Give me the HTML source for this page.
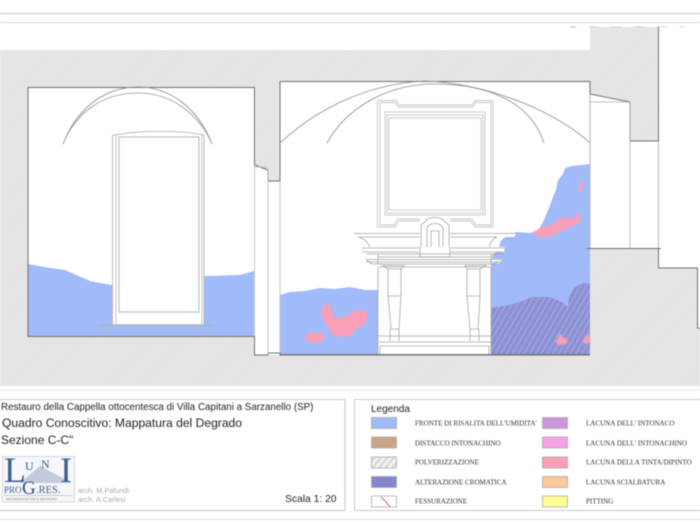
<!DOCTYPE html>
<html><head><meta charset="utf-8"><style>
html,body{margin:0;padding:0;background:#fff}
body{width:700px;height:525px;overflow:hidden;position:relative}
svg{position:absolute;left:0;top:0;filter:blur(.4px)}
</style></head><body>
<svg width="700" height="525" viewBox="0 0 700 525" xmlns="http://www.w3.org/2000/svg">
<defs>
<pattern id="g" width="2" height="2" patternUnits="userSpaceOnUse" patternTransform="rotate(45)"><rect width="2" height="2" fill="#ebebeb"/><rect width="1" height="2" fill="#dedede"/></pattern>
<pattern id="h" width="5" height="5" patternUnits="userSpaceOnUse" patternTransform="rotate(30)"><rect width="5" height="5" fill="#8c90d2"/><rect width="1.2" height="5" fill="#a3a8e4"/></pattern>
<pattern id="p" width="5" height="5" patternUnits="userSpaceOnUse" patternTransform="rotate(40)"><rect width="5" height="5" fill="#f2f2f2"/><rect width="2" height="5" fill="#d6d6d6"/></pattern>
<filter id="soft" x="-10%" y="-10%" width="120%" height="120%"><feGaussianBlur stdDeviation=".7"/></filter>
</defs>
<rect width="700" height="525" fill="#fff"/>
<path d="M0 13.5H700" stroke="#c4c4c4"/><path d="M0 22.5H700" stroke="#d8d8d8"/>
<path d="M570 27h6M589 27h10M611 27h11M633 27h11M656 27h11M679 27h6" stroke="#bbb"/>
<!-- masonry -->
<path d="M0 50H590V27H658.500V248H658.500V268H697.500V328H700V386H0Z" fill="url(#g)"/>
<!-- rooms -->
<path d="M28 87H254.500V165L268 170V181H280V81H590V94L630 102V141H658.500V248H590V355H254.500V336H28Z" fill="#fff"/>
<rect x="659" y="27" width="41" height="241" fill="#fff"/><rect x="698" y="268" width="2" height="60" fill="#fff"/>
<!-- blue -->
<path d="M28 264L50 268L65 270L90 281L100 283L112 285V336H254V271L240 275L204 276V336H28Z" fill="#a1baf9"/>
<path d="M100 336H212V326H100Z" fill="#a1baf9"/>
<path d="M280 295L290 292L305 291L320 288L335 289L350 287L365 290L378 290V354H280Z" fill="#a1baf9"/>
<path d="M590 164L572 166L565 168L563 174L558 180L556 190L553 197L549 208L544 220L538 231L530 233L517 232L507 235L500 242L499 250L492 255L490 258V355H590Z" fill="#a1baf9"/>
<path d="M491 308L510 305L522 301L532 297L550 297L562 302L568 307L569 297L574 288L582 283L590 284V354H491Z" fill="url(#h)"/>
<g fill="#fa9fb6" filter="url(#soft)">
<path d="M321 312L324 304L330 305L332 313L334 317L340 318L350 314L358 309L366 311L368 318L363 325L356 329L351 335L340 337L332 335L328 327L323 319Z"/>
<path d="M305 335L312 332L318 334L324 333L324 339L319 344L312 342L306 340Z"/>
<path d="M533 232L542 227L552 225L560 218L572 218L579 213L580 222L568 228L558 233L548 237L538 237Z"/>
<path d="M578 192L579 186L582 181L584 184L582 190Z"/>
<path d="M555 341L558 338L559 333L563 337L568 340L566 344L558 345Z"/>
<path d="M583 342L585 337L589 334H590V342L585 344Z"/>
</g>
<!-- altar white -->
<path d="M354 233H517L514 237H498L492 247H505L504 252H492V259H502L499 264H491V354H378V268L366 260L362 248H368L362 238Z" fill="#fff"/>
<path d="M378 290H490V354H378Z" fill="#fff"/>
<!-- wall outlines -->
<g fill="none" stroke="#707070" stroke-width="1">
<path d="M28 87.500H254.500V165L268 170V181H280V81.500H590V94L630 102V141H658.500V27" stroke-width="1"/>
<path d="M28 87V336.500H254.500V355H268V353H280V355H590" stroke-width="1"/>
<path d="M587 248.500H661M658.500 248V268H697.500V328H700"/>
</g>
<path d="M590 94V248" stroke="#b5b5b5"/>
<g fill="none" stroke="#a8a8a8" stroke-width=".8">
<path d="M590 102H630M630 102V248M658.500 141V248"/>
<path d="M254.500 167H268M254.500 165V336M268 170V354M280 181V353" stroke="#bbb"/>
<!-- left arches -->
<path d="M63 144C77 108 105 87 138 87C170 87 198 108 212 144" stroke="#8a8a8a"/>
<path d="M63 144C77 110 105 93 138 93C170 93 198 112 212 144" stroke="#999"/>
<!-- right arches -->
<path d="M280 143C310 115 360 84 425 81C495 84 560 115 590 143" stroke="#8a8a8a"/>
<path d="M327 143C345 110 385 84 434 84C485 84 530 100 544 143" stroke="#8a8a8a"/>
</g>
<!-- left door -->
<g fill="none" stroke="#bdbdbd">
<path d="M112.500 135V325M204 135V325M112.500 135H116C140 130 180 130 204 135" stroke="#aaa" stroke-width=".8"/>
<path d="M116 135V325M202 135V325" stroke="#c4c4c4"/>
<rect x="119" y="137" width="80" height="175" stroke="#c4c4c4" stroke-width="1.300"/>
</g>
<path d="M100 324.500H212L213 326.500H100Z" fill="#a9b6d2" stroke="#b0b7c8" stroke-width=".6"/>
<!-- picture frame -->
<g fill="none" stroke="#c6c6c6" stroke-width=".9">
<path d="M377.500 100.500H396L399 105H472L475 100.500H493V227H475L471 221H450M420 221H399L395 227H377.500V100.500"/>
<path d="M380 102.500H395L398 107H473L476 102.500H491V225H476L472 219H450M420 219H398L394 225H380V102.500"/>
<rect x="385" y="112" width="100" height="103"/>
<rect x="387" y="115" width="96" height="98"/>
<rect x="389" y="118" width="92" height="92"/>
</g>
<!-- altar lines -->
<g fill="none" stroke="#a5a5a5" stroke-width=".8">
<path d="M354 233.500H420M450 233.500H517M358 237H420M450 237H497M358 237C364 238 368 243 370 247M497 237C492 239 490 244 489 247"/>
<path d="M362 248H419M451 248H505M362 252H419M451 252H503M366 254H503"/>
<path d="M378 254V264M491 254V264"/>
<path d="M420 247V257H450V247M421 247V225L425 222C428 216 442 216 445 222L449 225V247M427 247V228C430 222 440 222 443 228V247M431 247V231H439V247"/>
<path d="M378 257H491M366 259.500H502M366 262H500L491 264M372 264H498M378 267H491M366 259.500L372 264"/>
<path d="M378 268V354M491 268V354"/>
<path d="M383 265.500H404L401 269H388Z"/>
<path d="M388 269V296H401V269M388 296L391 329H399L401 296M390 329V341M399 329V341"/>
<path d="M465 265.500H486L480 269H467Z"/>
<path d="M467 269V296H480V269M467 296L470 329H478L480 296M470 329V341M479 329V341"/>
<path d="M378 336H491M380 346H489M380 346V354M489 346V354M379 342H491"/>
</g>
<path d="M280 354.500H590" stroke="#666" stroke-dasharray="2 .5"/>
<!-- bottom -->
<path d="M0 390H700" stroke="#e2e2e2"/><path d="M0 519.500H700" stroke="#dcdcdc"/>
<rect x="-1" y="399.500" width="346" height="111" fill="#fff" stroke="#c8c8c8"/>
<rect x="354.500" y="399.500" width="347" height="111" fill="#fff" stroke="#c8c8c8"/>
<g font-family="'Liberation Sans',sans-serif" fill="#222">
<text x="1" y="410" font-size="9.800">Restauro della Cappella ottocentesca di Villa Capitani a Sarzanello (SP)</text>
<text x="2" y="427" font-size="12.100">Quadro Conoscitivo: Mappatura del Degrado</text>
<text x="1" y="444" font-size="12">Sezione C-C"</text>
<text x="285" y="502" font-size="10.300">Scala 1: 20</text>
<text x="371" y="412" font-size="10">Legenda</text>
<text x="78" y="493" font-size="7.300" fill="#aaa">arch. M.Pafundi</text>
<text x="78" y="502" font-size="7.300" fill="#aaa">arch. A.Carlesi</text>
</g>
<!-- logo -->
<rect x="2.500" y="456.500" width="72" height="45.500" fill="#f6f7fa" stroke="#d5d5d5"/>
<path d="M20 483L40 466L72 483Z" fill="#c3cbdc"/>
<path d="M4 495.500H72" stroke="#b5bccb" stroke-width=".7"/>
<g font-family="'Liberation Serif',serif" fill="#3f5a8c">
<text x="4" y="482" font-size="36" fill="#3e5c96">L</text>
<text x="25" y="470" font-size="12">U</text>
<text x="41" y="468" font-size="12">N</text>
<text x="60" y="482" font-size="36" fill="#3e5c96">I</text>
<text x="4" y="493" font-size="9">PRO</text>
<text x="22" y="494" font-size="19" fill="#2f4f8a">G</text>
<text x="36" y="493" font-size="10.500">.RES.</text>
<text x="6" y="500" font-size="3.200" fill="#667">METODOLOGIE PER IL RESTAURO</text>
</g>
<!-- legend -->
<g stroke="#aaa" stroke-width=".8">
<rect x="371.500" y="417.500" width="25" height="11" fill="#a1baf9"/>
<rect x="371.500" y="437" width="25" height="11" fill="#c9a585"/>
<rect x="371.500" y="457" width="25" height="11" fill="url(#p)"/>
<rect x="371.500" y="476.500" width="25" height="11" fill="#8386ca"/>
<rect x="371.500" y="496" width="25" height="11" fill="#fff"/>
<rect x="542.500" y="417.500" width="25" height="11" fill="#cc95e0"/>
<rect x="542.500" y="437" width="25" height="11" fill="#fb9fe8"/>
<rect x="542.500" y="457" width="25" height="11" fill="#fb9db4"/>
<rect x="542.500" y="476.500" width="25" height="11" fill="#fcc99c"/>
<rect x="542.500" y="496" width="25" height="11" fill="#fdfd96"/>
</g>
<path d="M381 497L386 502L390 507" stroke="#b9705a" stroke-width="1" fill="none"/>
<g font-family="'Liberation Serif',serif" font-size="7.050" fill="#333">
<text x="415" y="425.500">FRONTE DI RISALITA DELL'UMIDITA'</text>
<text x="415" y="445.500">DISTACCO INTONACHINO</text>
<text x="415" y="464.500">POLVERIZZAZIONE</text>
<text x="415" y="484.500">ALTERAZIONE CROMATICA</text>
<text x="415" y="503.500">FESSURAZIONE</text>
<text x="586" y="425.500">LACUNA DELL' INTONACO</text>
<text x="586" y="445.500">LACUNA DELL' INTONACHINO</text>
<text x="586" y="464.500">LACUNA DELLA TINTA/DIPINTO</text>
<text x="586" y="484.500">LACUNA SCIALBATURA</text>
<text x="586" y="503.500">PITTING</text>
</g>
</svg>
</body></html>
